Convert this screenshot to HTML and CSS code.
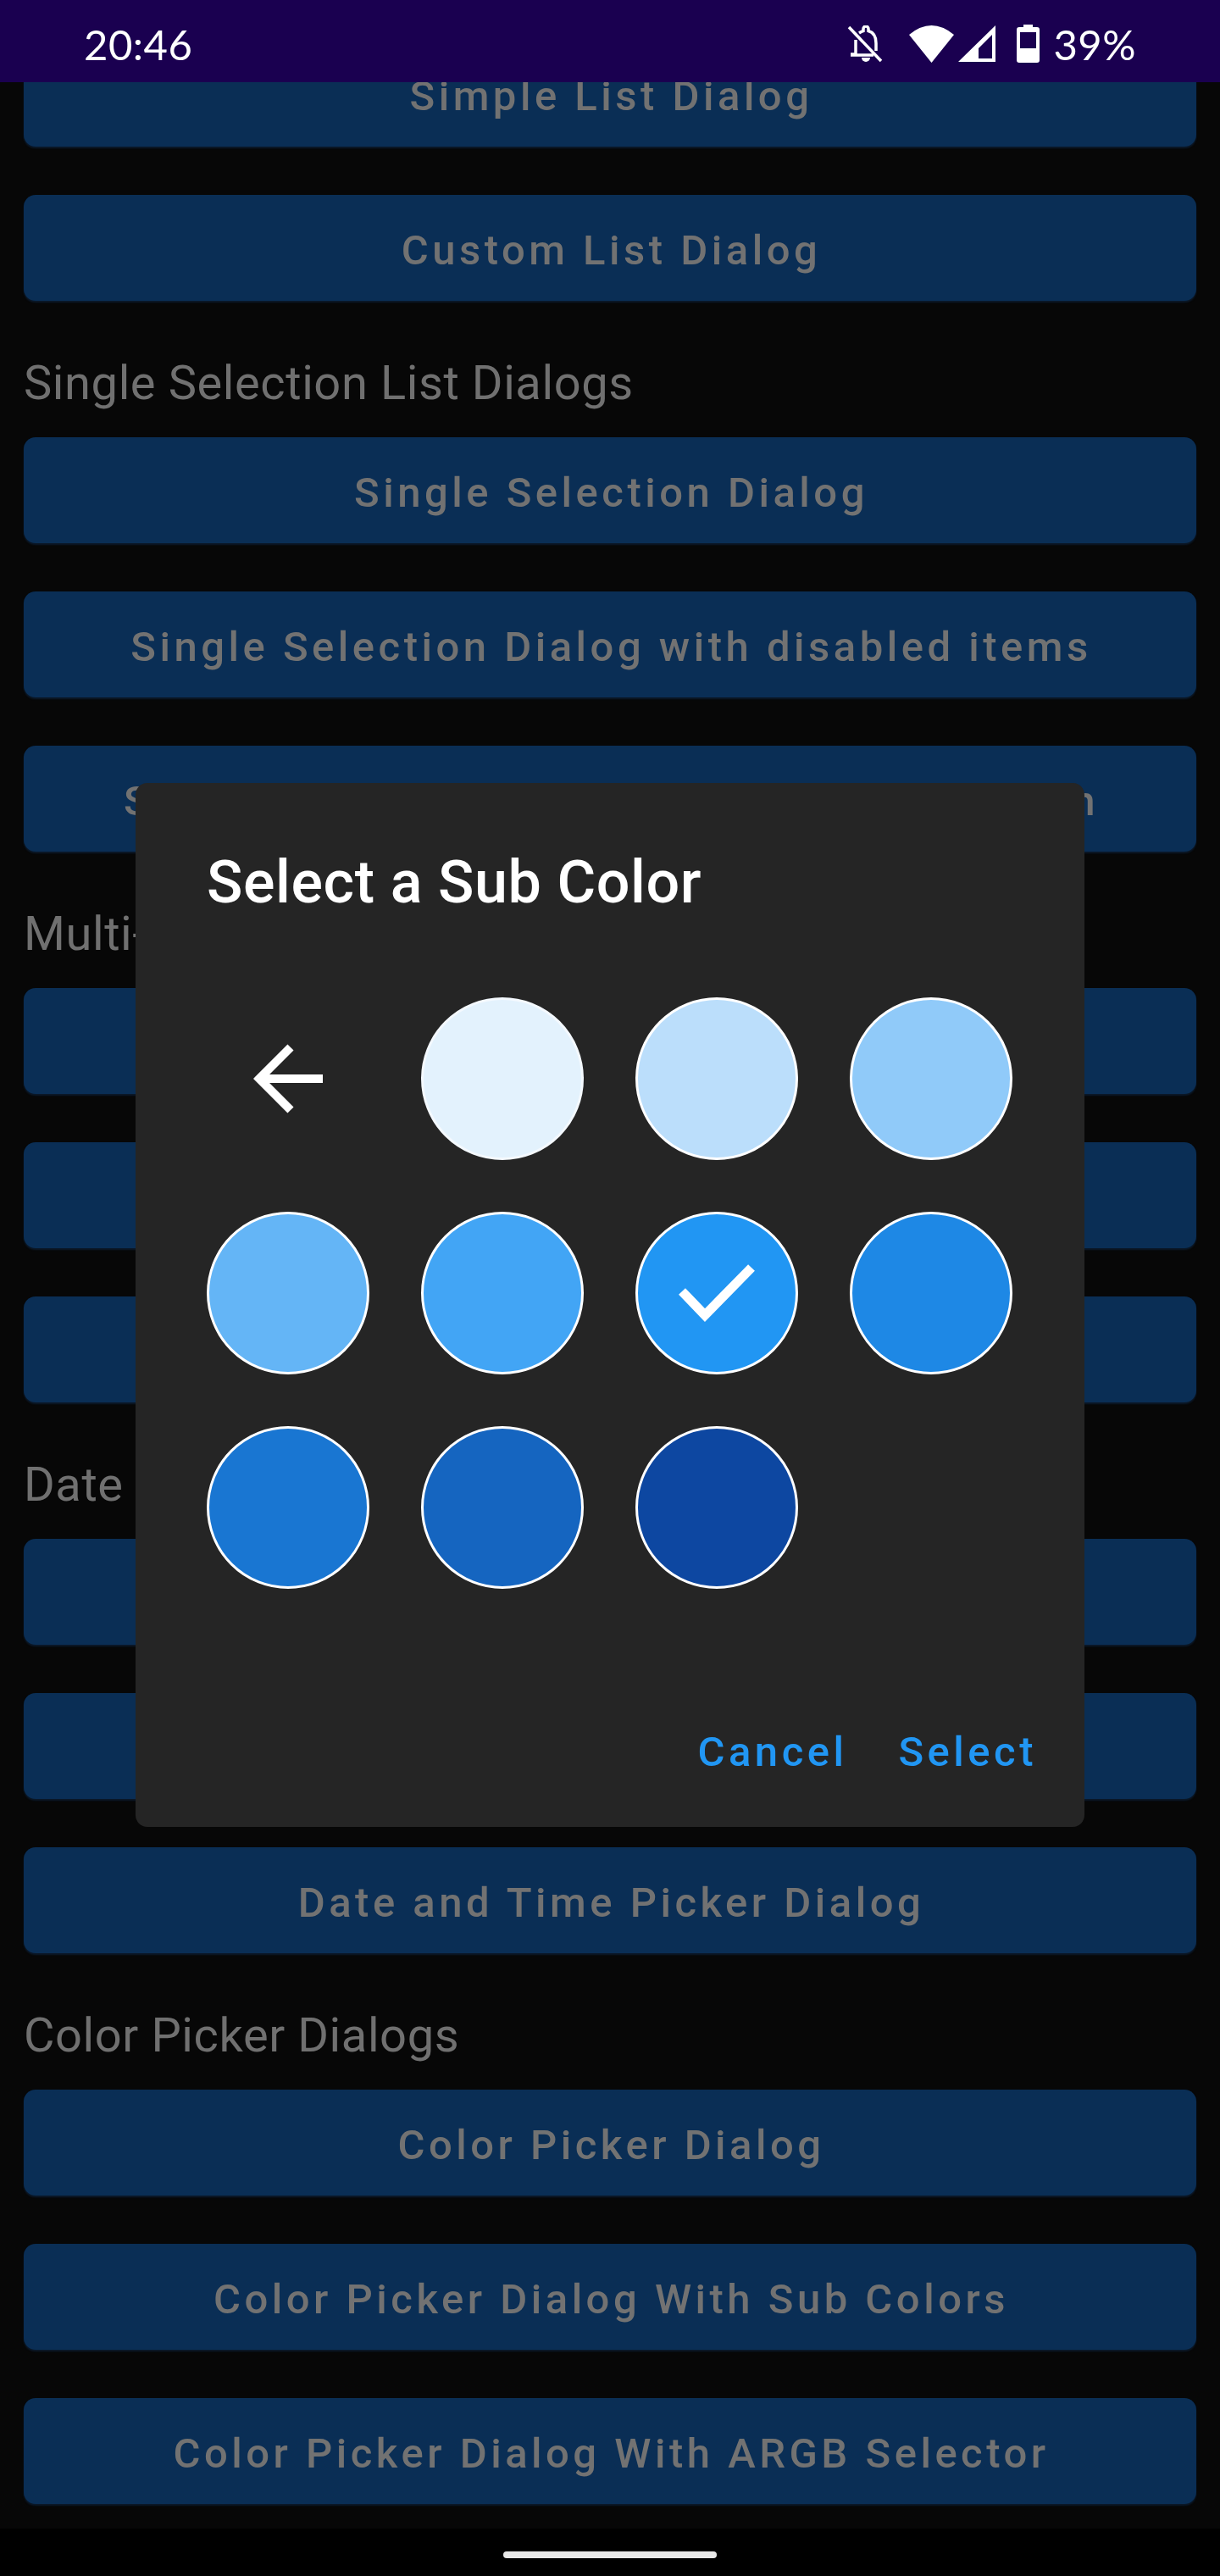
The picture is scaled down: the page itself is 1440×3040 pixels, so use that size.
FILE: index.html
```html
<!DOCTYPE html>
<html lang="en">
<head>
<meta charset="utf-8">
<title>Select a Sub Color</title>
<link rel="stylesheet" href="styles.css">
</head>
<body>
<div class="screen">
  <header class="status">
    <span class="clock">20:46</span>
    <div class="status-icons">
      <svg class="ic-bell" viewBox="0 0 42 44" width="42" height="44"><path d="M2 2 L40 42" stroke="#fff" stroke-width="3.5" fill="none"/><path d="M10 17 V34 H4 M4 35 H31 M14 9 Q17 7 19 6.5 V4 a3 3 0 0 1 6 0 V6.5 Q34 9 34 21 V30" stroke="#fff" stroke-width="3.5" fill="none"/><path d="M17 38 h10 a5 5 0 0 1 -10 0z" fill="#fff"/></svg>
      <svg class="ic-wifi" viewBox="0 0 53 44" width="53" height="44"><path d="M0 11 Q26.500 -11 53 11 L26.500 44Z" fill="#fff"/></svg>
      <svg class="ic-signal" viewBox="0 0 44 43" width="44" height="43"><path fill-rule="evenodd" d="M44 0 V43 H0 Z M40 11 L24 27 V39 H40 Z" fill="#fff"/></svg>
      <svg class="ic-batt" viewBox="0 0 27 45" width="27" height="45"><path fill-rule="evenodd" d="M8 0 H19 V3 H24 a3 3 0 0 1 3 3 V42 a3 3 0 0 1 -3 3 H3 a3 3 0 0 1 -3 -3 V6 a3 3 0 0 1 3 -3 H8 Z M4 9 V28 H23 V9 Z" fill="#fff"/></svg>
      <span class="pct">39%</span>
    </div>
  </header>
  <main class="scroll">
    <div class="list">
      <button class="btn">Simple List Dialog</button>
      <button class="btn">Custom List Dialog</button>
      <h2 class="section">Single Selection List Dialogs</h2>
      <button class="btn">Single Selection Dialog</button>
      <button class="btn">Single Selection Dialog with disabled items</button>
      <button class="btn">Single Selection Dialog with Positive Button</button>
      <h2 class="section">Multi-Selection List Dialogs</h2>
      <button class="btn">Multi-Selection Dialog</button>
      <button class="btn">Multi-Selection Dialog with disabled items</button>
      <button class="btn">Multi-Selection Dialog with Positive Button</button>
      <h2 class="section">Date and Time Picker Dialogs</h2>
      <button class="btn">Date Picker Dialog</button>
      <button class="btn">Time Picker Dialog</button>
      <button class="btn">Date and Time Picker Dialog</button>
      <h2 class="section">Color Picker Dialogs</h2>
      <button class="btn">Color Picker Dialog</button>
      <button class="btn">Color Picker Dialog With Sub Colors</button>
      <button class="btn">Color Picker Dialog With ARGB Selector</button>
    </div>
  </main>
  <footer class="nav"><span class="handle"></span></footer>

  <section class="dialog">
    <h1 class="dialog-title">Select a Sub Color</h1>
    <div class="swatches">
      <div class="back">
        <svg viewBox="0 0 82 82" width="82" height="82"><path d="M82 41 H7 M44 4 L7 41 L44 78" stroke="#fff" stroke-width="10" fill="none"/></svg>
      </div>
      <div class="swatch c50"></div>
      <div class="swatch c100"></div>
      <div class="swatch c200"></div>
      <div class="swatch c300"></div>
      <div class="swatch c400"></div>
      <div class="swatch c500">
        <svg viewBox="0 0 90 70" width="90" height="70"><path d="M4 33 L31 61 L86 5" stroke="#fff" stroke-width="11" fill="none"/></svg>
      </div>
      <div class="swatch c600"></div>
      <div class="swatch c700"></div>
      <div class="swatch c800"></div>
      <div class="swatch c900"></div>
    </div>
    <div class="actions">
      <span class="action">Cancel</span>
      <span class="action">Select</span>
    </div>
  </section>
</div>
</body>
</html>
```
FILE: styles.css
```css
* { box-sizing: border-box; }
html, body { margin: 0; padding: 0; background: #000; }
.screen {
  position: relative;
  width: 1440px;
  height: 3040px;
  display: flex;
  flex-direction: column;
  overflow: hidden;
  font-family: Roboto, "Liberation Sans", sans-serif;
}
.status {
  flex: 0 0 97px;
  background: #1a0050;
  display: flex;
  align-items: center;
  justify-content: space-between;
  padding: 6px 99px 0 99px;
  color: #fff;
  z-index: 1;
}
.clock, .pct { font-family: Lato, "Open Sans", sans-serif; font-size: 49px; letter-spacing: .5px; color: #fff; }
.status-icons { display: flex; align-items: center; }
.ic-bell { margin-right: 31px; }
.ic-wifi { margin-right: 5px; }
.ic-signal { margin-right: 25px; }
.ic-batt { margin-right: 16px; }
.scroll {
  flex: 1 1 auto;
  background: #070707;
  overflow: hidden;
}
.list {
  display: flex;
  flex-direction: column;
  margin-top: -49px;
  padding: 0 28px;
}
.btn {
  flex: 0 0 125px;
  margin: 0 0 57px;
  padding: 6px 0 0 3px;
  border: 0;
  border-radius: 14px;
  background: #0a2e55;
  color: #727272;
  font-family: Roboto, sans-serif;
  font-weight: 500;
  font-size: 49px;
  letter-spacing: 4.5px;
  box-shadow: 0 2px 2px rgba(20, 60, 110, .35);
}
.section {
  margin: 0;
  height: 104px;
  color: #707070;
  font-weight: 400;
  font-size: 56px;
  letter-spacing: .6px;
  line-height: 80px;
}
.nav {
  flex: 0 0 56px;
  background: #000;
  display: flex;
  justify-content: center;
  padding-top: 27px;
}
.handle { width: 252px; height: 8px; border-radius: 4px; background: #e8e8e8; }
.dialog {
  position: absolute;
  left: 160px;
  top: 924px;
  width: 1120px;
  height: 1232px;
  background: #252525;
  border-radius: 14px;
  padding: 0 84px;
  display: flex;
  flex-direction: column;
}
.dialog-title {
  margin: 75px 0 0;
  height: 84px;
  line-height: 84px;
  color: #fff;
  font-weight: 500;
  font-size: 70px;
  letter-spacing: .6px;
}
.swatches {
  margin-top: 94px;
  display: grid;
  grid-template-columns: repeat(4, 192px);
  grid-auto-rows: 192px;
  column-gap: 61px;
  row-gap: 61px;
}
.back { display: flex; align-items: center; justify-content: center; }
.swatch {
  border-radius: 50%;
  border: 3px solid #fff;
  display: flex;
  align-items: center;
  justify-content: center;
}
.c50 { background: #e3f2fd; border-color: #f4f9fe; }
.c100 { background: #bbdefb; }
.c200 { background: #90caf9; }
.c300 { background: #64b5f6; }
.c400 { background: #42a5f5; }
.c500 { background: #2196f3; }
.c600 { background: #1e88e5; }
.c700 { background: #1976d2; }
.c800 { background: #1565c0; }
.c900 { background: #0d47a1; }
.actions {
  margin-top: auto;
  margin-right: -28px;
  margin-bottom: 58px;
  display: flex;
  justify-content: flex-end;
  gap: 60px;
}
.action {
  color: #2196f3;
  font-weight: 500;
  font-size: 49px;
  letter-spacing: 4.5px;
  line-height: 60px;
}
```
